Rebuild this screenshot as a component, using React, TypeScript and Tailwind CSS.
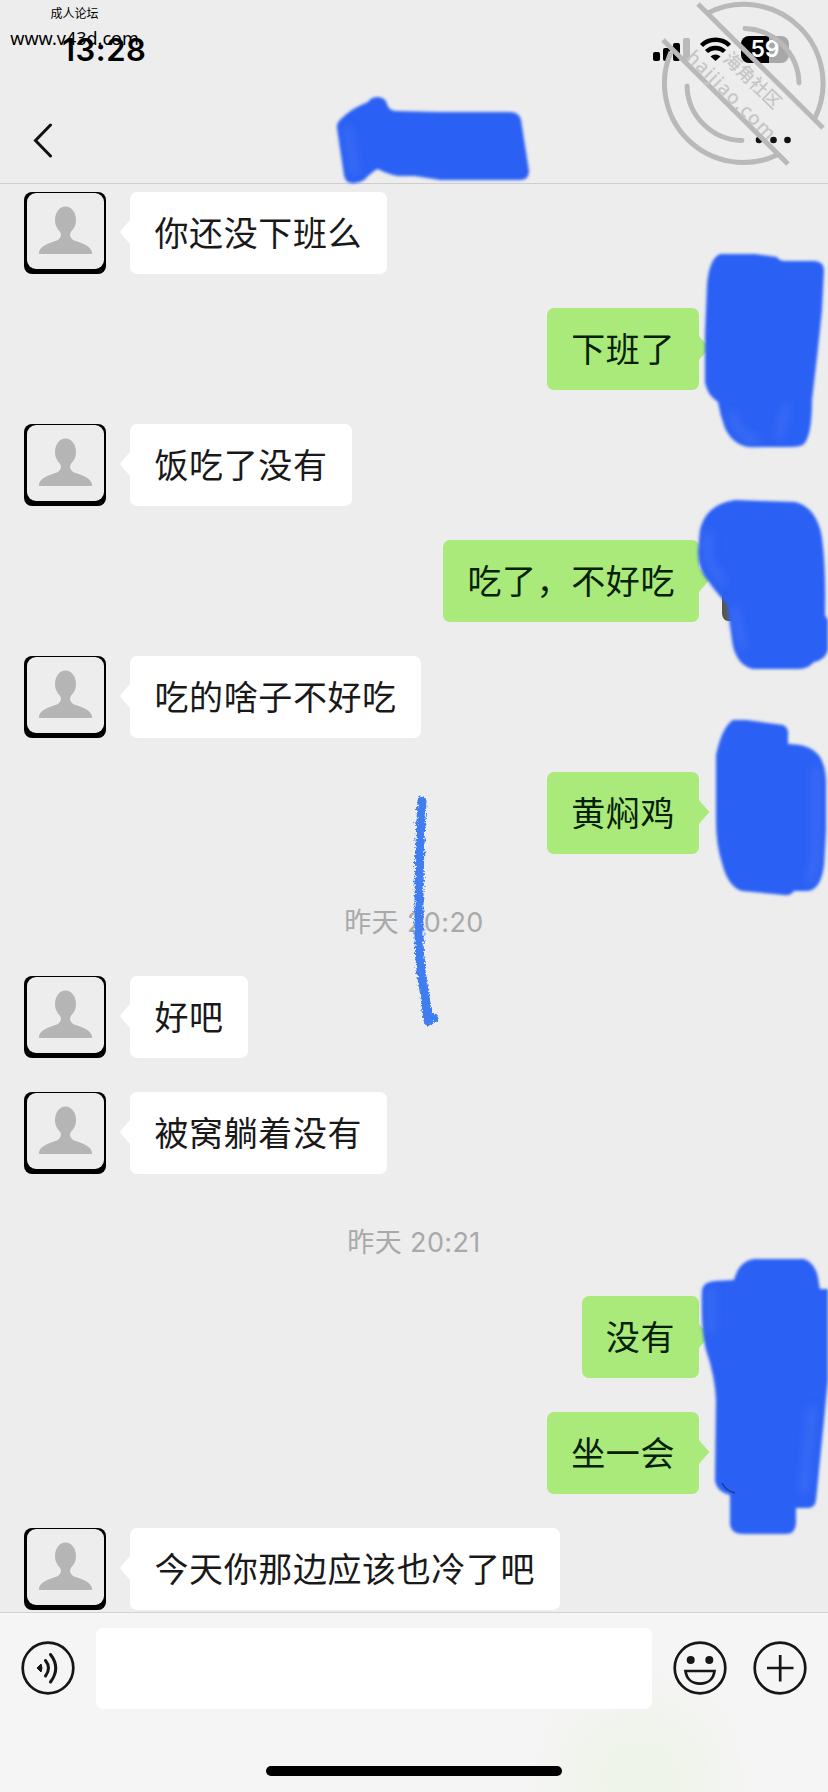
type Message = { kind: "in" | "out" | "time"; text: string };

const messages: Message[] = [
  { kind: "in", text: "你还没下班么" },
  { kind: "out", text: "下班了" },
  { kind: "in", text: "饭吃了没有" },
  { kind: "out", text: "吃了，不好吃" },
  { kind: "in", text: "吃的啥子不好吃" },
  { kind: "out", text: "黄焖鸡" },
  { kind: "time", text: "昨天 20:20" },
  { kind: "in", text: "好吧" },
  { kind: "in", text: "被窝躺着没有" },
  { kind: "time", text: "昨天 20:21" },
  { kind: "out", text: "没有" },
  { kind: "out", text: "坐一会" },
  { kind: "in", text: "今天你那边应该也冷了吧" },
];

function Avatar() {
  return (
    <div className="h-[82px] w-[82px] shrink-0 rounded-[8px] bg-black pt-px pr-[2px] pb-[5px] pl-[3px]">
      <div className="h-full rounded-[9px] bg-[#ededed]">
        <svg viewBox="0 0 77 76" className="h-full w-full" fill="#b5b5b5">
          <ellipse cx="38.500" cy="27" rx="10.500" ry="13.500" />
          <path d="M32 36H45L43 41Q43 45 47 47.500C56 50 65 54 65 60V61H12V60C12 54 21 50 30 47.500Q34 45 34 41Z" />
        </svg>
      </div>
    </div>
  );
}

function MessageRow({ message }: { message: Message }) {
  if (message.kind === "time") {
    return (
      <div className="flex h-[54px] items-center justify-center pt-[16px] text-[27px] tracking-[0.400px] text-[#a9a9a9]">
        {message.text}
      </div>
    );
  }

  if (message.kind === "out") {
    return (
      <div className="flex h-[82px] justify-end pr-[120px]">
        <div className="flex items-center rounded-[7px] bg-[#a9ea7a] px-[24px] text-[34px] tracking-[0.600px] text-[#06200a]">
          {message.text}
        </div>
        <svg viewBox="0 0 10 24" className="mt-[28px] -mr-[1px] h-6 w-[10px]" fill="#a9ea7a">
          <path d="M0 0L9.500 11Q10.500 12 9.500 13L0 24Z" />
        </svg>
      </div>
    );
  }

  return (
    <div className="flex h-[82px] pl-[24px]">
      <Avatar />
      <svg viewBox="0 0 10 24" className="mt-[28px] ml-[14px] h-6 w-[10px]" fill="#fff">
        <path d="M10 0L.5 11Q-.5 12 .5 13L10 24Z" />
      </svg>
      <div className="flex items-center rounded-[7px] bg-white px-[24.500px] text-[34px] tracking-[0.600px] text-[#191919]">
        {message.text}
      </div>
    </div>
  );
}

function StatusBar() {
  return (
    <div className="flex h-[96px] items-start justify-between pt-[36px] pr-[39px] pl-[62px]">
      <span className="font-[Inter] text-[31px] leading-[28px] font-semibold tracking-[0.500px] text-black">
        13:28
      </span>
      <div className="flex">
        <svg viewBox="0 0 88 28" className="h-7 w-[88px]">
          <rect x="0" y="16" width="7" height="9" rx="2" />
          <rect x="10" y="12" width="7" height="13" rx="2" />
          <rect x="20" y="7" width="7" height="18" rx="2" />
          <rect x="30" y="2" width="7" height="23" rx="2" fill="#b9b9b9" />
          <g fill="none" stroke="#000" strokeWidth="4.500">
            <path d="M48.500 9.500a20 20 0 0 1 28 0" />
            <path d="M53.500 15.500a13 13 0 0 1 18 0" />
          </g>
          <path d="M57.500 20.500a7.500 7.500 0 0 1 10 0l-5 4.500Z" />
        </svg>
        <div className="flex h-[27px] w-[48px] items-center justify-center rounded-[8px] bg-linear-to-r from-black from-58% to-[#a8a8a8] to-58% font-[Inter] text-[23px] leading-none font-semibold text-white">
          59
        </div>
      </div>
    </div>
  );
}

function NavBar() {
  return (
    <div className="flex h-[88px] items-center justify-between border-b border-[#cecece] pt-px pr-[35px] pl-[32px]">
      <svg viewBox="0 0 22 36" className="h-9 w-[22px]" fill="none" stroke="#111" strokeWidth="3" strokeLinecap="round">
        <path d="M18.500 3L3.500 18.500L18.500 34" />
      </svg>
      <svg viewBox="0 0 38 10" className="h-[10px] w-[38px]" fill="#111">
        <circle cx="4" cy="5" r="3.300" />
        <circle cx="18.500" cy="5" r="3.300" />
        <circle cx="32.500" cy="5" r="3.300" />
      </svg>
    </div>
  );
}

function InputBar() {
  return (
    <footer className="h-[180px] border-t border-[#d2d2d2] bg-[#f5f5f5] bg-[radial-gradient(circle_at_640px_165px,#eef4e9_0,#f0f4ec_50px,#f5f5f5_115px)]">
      <div className="flex h-[110px] items-center pr-[20px] pl-[20px]">
        <svg viewBox="0 0 56 56" className="h-14 w-14" fill="none" stroke="#161616" strokeWidth="2.700">
          <circle cx="28" cy="28" r="25.300" />
          <path d="M17 28L21 24Q23 28 21 32Z" fill="#161616" strokeWidth="1" strokeLinejoin="round" />
          <path d="M25.500 20.500Q31.500 28 25.500 36M30.500 14.500Q41 28 30.500 42" strokeWidth="3" strokeLinecap="round" />
        </svg>
        <div className="ml-[20px] h-[81px] flex-1 rounded-[7px] bg-white" />
        <div className="ml-[20px] flex gap-6">
          <svg viewBox="0 0 56 56" className="h-14 w-14" fill="none" stroke="#161616" strokeWidth="2.700">
            <circle cx="28" cy="28" r="25.300" />
            <circle cx="18.700" cy="20" r="4" fill="#161616" stroke="none" />
            <circle cx="37.300" cy="20" r="4" fill="#161616" stroke="none" />
            <path d="M13.500 31H42.500C41.500 39 36 43.700 28 43.700S14.500 39 13.500 31Z" />
          </svg>
          <svg viewBox="0 0 56 56" className="h-14 w-14" fill="none" stroke="#161616" strokeWidth="2.700">
            <circle cx="28" cy="28" r="25.300" />
            <path d="M15 28H41.500M28.200 15V41.500" />
          </svg>
        </div>
      </div>
      <div className="mx-auto mt-[43px] h-[10px] w-[296px] rounded-full bg-black" />
    </footer>
  );
}

/* Marker strokes drawn over names and avatars */
function Scribbles() {
  return (
    <svg viewBox="0 0 828 1792" className="absolute inset-0 h-full w-full">
      <defs>
        <filter id="soft" x="-10%" y="-10%" width="120%" height="120%">
          <feGaussianBlur stdDeviation="1.400" />
        </filter>
        <filter id="glow" x="-50%" y="-50%" width="200%" height="200%">
          <feGaussianBlur stdDeviation="4" />
        </filter>
        <filter id="crayon" filterUnits="userSpaceOnUse" x="400" y="780" width="60" height="260">
          <feTurbulence type="fractalNoise" baseFrequency="0.450" numOctaves="2" seed="4" />
          <feDisplacementMap in="SourceGraphic" scale="7" />
        </filter>
      </defs>
      <path d="M722 594V614Q723 621 728 621H750V594Z" fill="#55584f" />
      <g fill="#2b60f4" filter="url(#soft)">
        <path d="M337 128Q336 123 342 118Q352 108 368 102Q371 97 378 97Q386 98 387 104Q389 111 396 111L440 112H510Q519 112 521 120L529 171Q529 180 520 180H440L415 176H397Q385 173 378 169Q374 170 364 180Q358 184 351 183Q345 182 344 175Z" />
        <path d="M720 254H755L777 257Q779 261 785 261H815Q824 262 824 270L822 310Q818 350 812 400Q812 435 804 444Q801 447 790 447L749 447Q733 445 725 428Q720 415 718 402Q707 395 705 382V335L707 285Q709 259 720 254Z" />
        <path d="M700 530Q706 504 735 500L795 502Q814 506 821 532Q826 560 825 615L828 620V650Q825 660 814 662Q808 669 799 669H753Q738 666 733 646L727 604Q719 596 709 582Q698 570 698 552Z" />
        <path d="M733 720L746 720L783 725Q789 728 788 735V744Q811 744 820 757Q825 765 826 780V830L824 865Q821 890 807 891H794Q791 896 784 895L742 891Q728 887 722 863Q716 845 716 820L716 755Q722 727 733 720Z" />
        <path d="M734 1280Q739 1261 754 1259H804Q817 1263 819 1284L820 1289H828V1380L822 1440L816 1500Q815 1509 806 1508H796V1524Q795 1534 786 1534H743Q731 1534 730 1524V1495Q717 1492 715 1481L716 1400Q715 1376 706 1350Q701 1330 702 1290Q703 1282 715 1281Z" />
      </g>
      {/* thinner pressure near the stroke edges */}
      <g fill="none" stroke="#4674f6" strokeWidth="8" strokeLinecap="round" opacity="0.600" filter="url(#glow)">
        <path d="M348 130L355 172" />
        <path d="M732 415Q738 436 755 440M786 408L780 435" />
        <path d="M708 535V560L722 582M735 610L742 645" />
        <path d="M816 770V860L810 880" />
        <path d="M711 1292V1330M812 1410L804 1490" />
      </g>
      <path d="M722 1483Q726 1491 735 1493" fill="none" stroke="#173c95" strokeWidth="1.500" />
      <path
        d="M422 801Q419 850 419 910Q418 960 424 990Q427 1010 428 1021L434 1018"
        fill="none"
        stroke="#3f7df0"
        strokeWidth="9"
        strokeLinecap="round"
        strokeLinejoin="round"
        filter="url(#crayon)"
      />
    </svg>
  );
}

function Stamp() {
  return (
    <svg viewBox="0 0 198 190" className="absolute top-0 right-0 h-[190px] w-[198px]">
      <g fill="none" stroke="#b9b9b9" strokeWidth="5">
        <path d="M68 4L193 128M33 40L158 164" />
        <path d="M78 13A79 79 0 0 1 185 118M41 52A79 79 0 0 0 147 155" />
        <path d="M115 28.500A56 56 0 0 1 169 83M57 86A56 56 0 0 0 112 140.500" strokeLinecap="round" />
      </g>
      <g
        fill="#c6c6c6"
        textAnchor="middle"
        className="font-['Noto_Sans','Noto_Sans_CJK_SC',sans-serif] font-medium"
      >
        <text transform="translate(118 85) rotate(44)" fontSize="18">
          海角社区
        </text>
        <text transform="translate(97 100) rotate(45)" fontSize="19" letterSpacing="1.200">
          haijiao.com
        </text>
      </g>
    </svg>
  );
}

function SiteMark() {
  return (
    <div className="absolute top-[5px] left-[11px] flex w-[127px] flex-col items-center text-black">
      <span className="text-[12px] leading-[18px]">成人论坛</span>
      <span className="mt-[3px] font-['Noto_Sans',sans-serif] text-[18px] leading-[24px] whitespace-nowrap">www.v43d.com</span>
    </div>
  );
}

export default function App() {
  return (
    <div className="relative flex h-[1792px] w-[828px] flex-col overflow-hidden bg-[#ededed] font-['Inter','Noto_Sans_CJK_SC',sans-serif]">
      <header>
        <StatusBar />
        <NavBar />
      </header>
      <main className="flex flex-1 flex-col gap-[34px] pt-[8px]">
        {messages.map((message, index) => (
          <MessageRow key={index} message={message} />
        ))}
      </main>
      <InputBar />
      <Scribbles />
      <Stamp />
      <SiteMark />
    </div>
  );
}
